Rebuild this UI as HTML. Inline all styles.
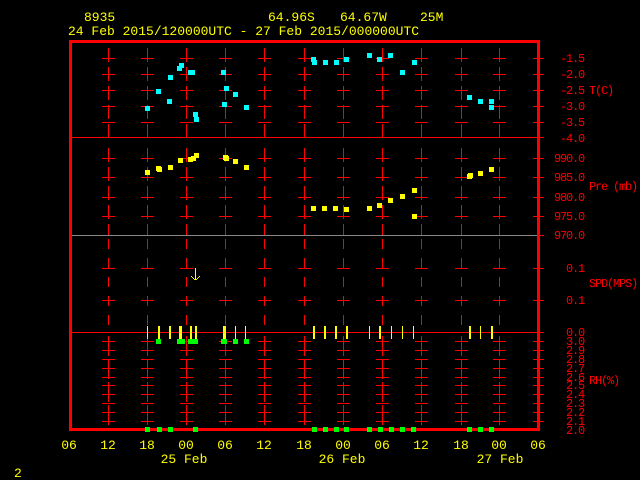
<!DOCTYPE html>
<html><head><meta charset="utf-8"><style>
html,body{margin:0;padding:0;background:#000;width:640px;height:480px;overflow:hidden}
svg{display:block}
text{font-family:"Liberation Mono",monospace;font-size:13px}
.y{fill:#ffff00}.r{fill:#ff0000}
.sm text{font-size:12px;letter-spacing:-1.2px}
</style></head><body>
<svg id="s" width="640" height="480" xmlns="http://www.w3.org/2000/svg">
<text class="y" x="84" y="21">8935</text>
<text class="y" x="268" y="21">64.96S</text>
<text class="y" x="340" y="21">64.67W</text>
<text class="y" x="420" y="21">25M</text>
<text class="y" x="68" y="35">24 Feb 2015/120000UTC - 27 Feb 2015/000000UTC</text>
<g class="r sm" text-anchor="end">
<text x="584" y="62">-1.5</text><text x="584" y="78">-2.0</text><text x="584" y="94">-2.5</text>
<text x="584" y="110">-3.0</text><text x="584" y="126">-3.5</text><text x="584" y="142">-4.0</text>
<text x="584" y="162">990.0</text><text x="584" y="181">985.0</text><text x="584" y="201">980.0</text>
<text x="584" y="220">975.0</text><text x="584" y="239">970.0</text>
<text x="584" y="272">0.1</text><text x="584" y="304">0.1</text><text x="584" y="336">0.0</text>
<text x="584" y="345">3.0</text><text x="584" y="354">2.9</text><text x="584" y="363">2.8</text>
<text x="584" y="372">2.7</text><text x="584" y="381">2.6</text><text x="584" y="389">2.5</text>
<text x="584" y="398">2.4</text><text x="584" y="407">2.3</text><text x="584" y="416">2.2</text>
<text x="584" y="425">2.1</text><text x="584" y="434">2.0</text>
</g>
<g class="r sm">
<text x="589" y="94">T(C)</text><text x="589" y="190">Pre (mb)</text>
<text x="589" y="287">SPD(MPS)</text><text x="589" y="384">RH(%)</text>
</g>
<g class="y" text-anchor="middle">
<text x="69" y="449">06</text><text x="108" y="449">12</text><text x="147" y="449">18</text>
<text x="186" y="449">00</text><text x="225" y="449">06</text><text x="264" y="449">12</text>
<text x="304" y="449">18</text><text x="343" y="449">00</text><text x="382" y="449">06</text>
<text x="421" y="449">12</text><text x="461" y="449">18</text><text x="499" y="449">00</text>
<text x="538" y="449">06</text>
<text x="184" y="463">25 Feb</text><text x="342" y="463">26 Feb</text><text x="500" y="463">27 Feb</text>
</g>
<text class="y" x="14" y="477">2</text>
</svg>
<script>
const s=document.getElementById('s'),NS='http://www.w3.org/2000/svg';
function el(t,a){const e=document.createElementNS(NS,t);for(const k in a)e.setAttribute(k,a[k]);s.appendChild(e);return e;}
function R(x,y,w,h,c){el('rect',{x,y,width:w,height:h,fill:c});}
function vd(x,y1,y2,d,g){for(let y=y1;y<y2;y+=d+g)R(x,y,1,Math.min(d,y2-y),'#f00');}
const xs=[108,147,186,225,264,304,343,382,421,461,499];
const tT=[58,74,90,106,122],tP=[158,177,197,216],tS=[268,300],tR=[341,350,359,368,377,385,394,403,412,421];
xs.forEach(x=>{
 vd(x,48,137,14,5);
 vd(x,148,235,14,5);
 vd(x,239,332,10,9);
 vd(x,336,426,20,3);
});
[...tT,...tP,...tS,...tR].forEach(y=>{xs.forEach(x=>R(x-6,y,13,1,'#f00'));R(533,y,11,1,'#f00');});
R(70,137,474,1,'#f00');R(70,235,468,1,'#888');R(538,235,6,1,'#f00');R(70,332,474,1,'#f00');
R(69,40,471,3,'#f00');R(69,428,471,3,'#f00');R(69,40,3,391,'#f00');R(537,40,3,391,'#f00');
function sq(x,y,c){R(x-2,y-2,5,5,c);}
[[147,108],[158,91],[170,77],[179,68],[181,65],[190,72],[192,72],[169,101],[196,119],[195,114],[223,72],[226,88],[224,104],[235,94],[246,107],[314,62],[313,59],[325,62],[336,62],[346,59],[369,55],[379,59],[390,55],[402,72],[414,62],[469,97],[480,101],[491,101],[491,107]].forEach(p=>sq(p[0],p[1],'#0ff'));
[[147,172],[158,168],[159,169],[170,167],[180,160],[190,159],[193,158],[196,155],[225,157],[226,158],[235,161],[246,167],[313,208],[324,208],[335,208],[346,209],[369,208],[379,205],[390,200],[402,196],[414,190],[414,216],[469,176],[470,175],[480,173],[491,169]].forEach(p=>sq(p[0],p[1],'#ff0'));
[[147,1],[158,2],[169,2],[179,3],[190,2],[195,2],[223,2],[225,1],[235,1],[245,1],[313,2],[324,2],[335,2],[346,2],[369,1],[379,2],[391,1],[402,1],[413,1],[469,2],[480,1],[491,2]].forEach(p=>R(p[0],326,p[1],13,'#ff0'));
[158,179,182,190,195,223,224,235,246].forEach(x=>sq(x,341,'#0f0'));
[147,159,170,195,314,325,336,346,369,380,391,402,413,469,480,491].forEach(x=>sq(x,429,'#0f0'));
R(195,268,1,12,'#ff0');
for(let i=1;i<=4;i++){R(195-i,280-i,1,1,'#ff0');R(195+i,280-i,1,1,'#ff0');}
</script>
</body></html>
